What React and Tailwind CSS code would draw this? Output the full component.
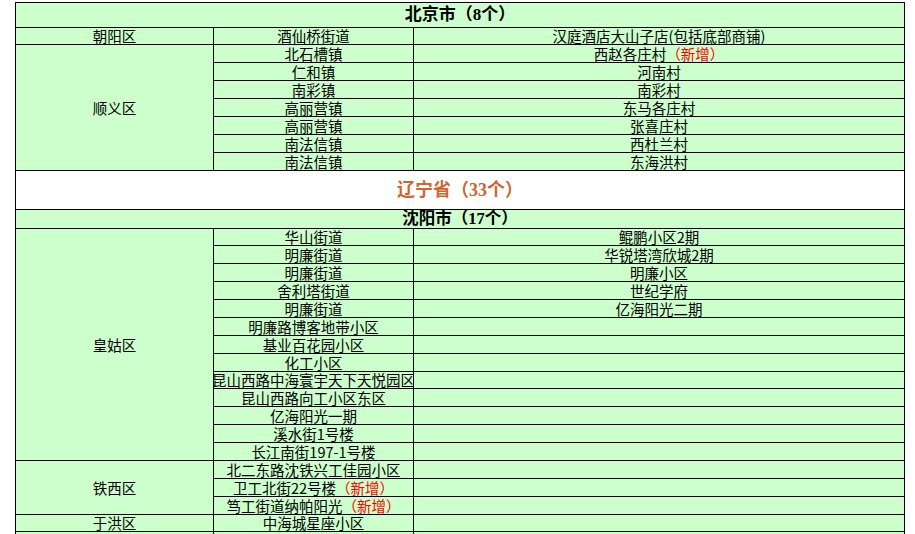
import React from 'react';

const NEW = <span className="text-[#ff0000]">（新增）</span>;

const beijing = [
  { d: '朝阳区', span: 1, s: '酒仙桥街道', c: '汉庭酒店大山子店(包括底部商铺)' },
  { d: '顺义区', span: 7, s: '北石槽镇', c: <>西赵各庄村{NEW}</> },
  { s: '仁和镇', c: '河南村' },
  { s: '南彩镇', c: '南彩村' },
  { s: '高丽营镇', c: '东马各庄村' },
  { s: '高丽营镇', c: '张喜庄村' },
  { s: '南法信镇', c: '西杜兰村' },
  { s: '南法信镇', c: '东海洪村' },
];

const shenyang = [
  { d: '皇姑区', span: 13, s: '华山街道', c: '鲲鹏小区2期' },
  { s: '明廉街道', c: '华锐塔湾欣城2期' },
  { s: '明廉街道', c: '明廉小区' },
  { s: '舍利塔街道', c: '世纪学府' },
  { s: '明廉街道', c: '亿海阳光二期' },
  { s: '明廉路博客地带小区' },
  { s: '基业百花园小区' },
  { s: '化工小区' },
  { s: '昆山西路中海寰宇天下天悦园区' },
  { s: '昆山西路向工小区东区' },
  { s: '亿海阳光一期' },
  { s: '溪水街1号楼' },
  { s: '长江南街197-1号楼' },
  { d: '铁西区', span: 3, s: '北二东路沈铁兴工佳园小区' },
  { s: <>卫工北街22号楼{NEW}</> },
  { s: <>笃工街道纳帕阳光{NEW}</> },
  { d: '于洪区', span: 1, s: '中海城星座小区' },
  { d: '', span: 1, s: '' },
];

function Cell({ children, rowSpan }) {
  return (
    <td rowSpan={rowSpan} className="border border-black p-0 align-middle">
      <div className="flex justify-center overflow-x-clip whitespace-nowrap">{children}</div>
    </td>
  );
}

function Rows({ rows }) {
  return rows.map((r, i) => (
    <tr key={i} className="h-[17.88px]">
      {r.d !== undefined && <Cell rowSpan={r.span}>{r.d}</Cell>}
      <Cell>{r.s}</Cell>
      <Cell>{r.c}</Cell>
    </tr>
  ));
}

const serif = { fontFamily: '"Liberation Serif", "Noto Sans CJK SC", serif' };

export default function App() {
  return (
    <div className="min-h-[534px] bg-white pt-[2px] pl-[15px]">
      <table
        className="w-[890px] table-fixed border-collapse bg-[#ccffcc] text-[14.5px] leading-[15px] text-black"
        style={{ fontFamily: '"Noto Sans CJK SC", sans-serif' }}
      >
        <colgroup>
          <col className="w-[198px]" />
          <col className="w-[200px]" />
          <col />
        </colgroup>
        <tbody>
          <tr className="h-[24.5px]">
            <td colSpan={3} className="border border-black p-0 text-center text-[17px] font-bold leading-[18px]" style={serif}>
              北京市（8个）
            </td>
          </tr>
          <Rows rows={beijing} />
          <tr className="h-[39px]">
            <td
              colSpan={3}
              className="border border-black bg-white p-0 text-center text-[18px] font-bold leading-[20px] text-[#cc6633]"
              style={serif}
            >
              辽宁省（33个）
            </td>
          </tr>
          <tr className="h-[19px]">
            <td colSpan={3} className="border border-black p-0 text-center text-[16.5px] font-bold leading-[16px]" style={serif}>
              沈阳市（17个）
            </td>
          </tr>
          <Rows rows={shenyang} />
        </tbody>
      </table>
    </div>
  );
}
